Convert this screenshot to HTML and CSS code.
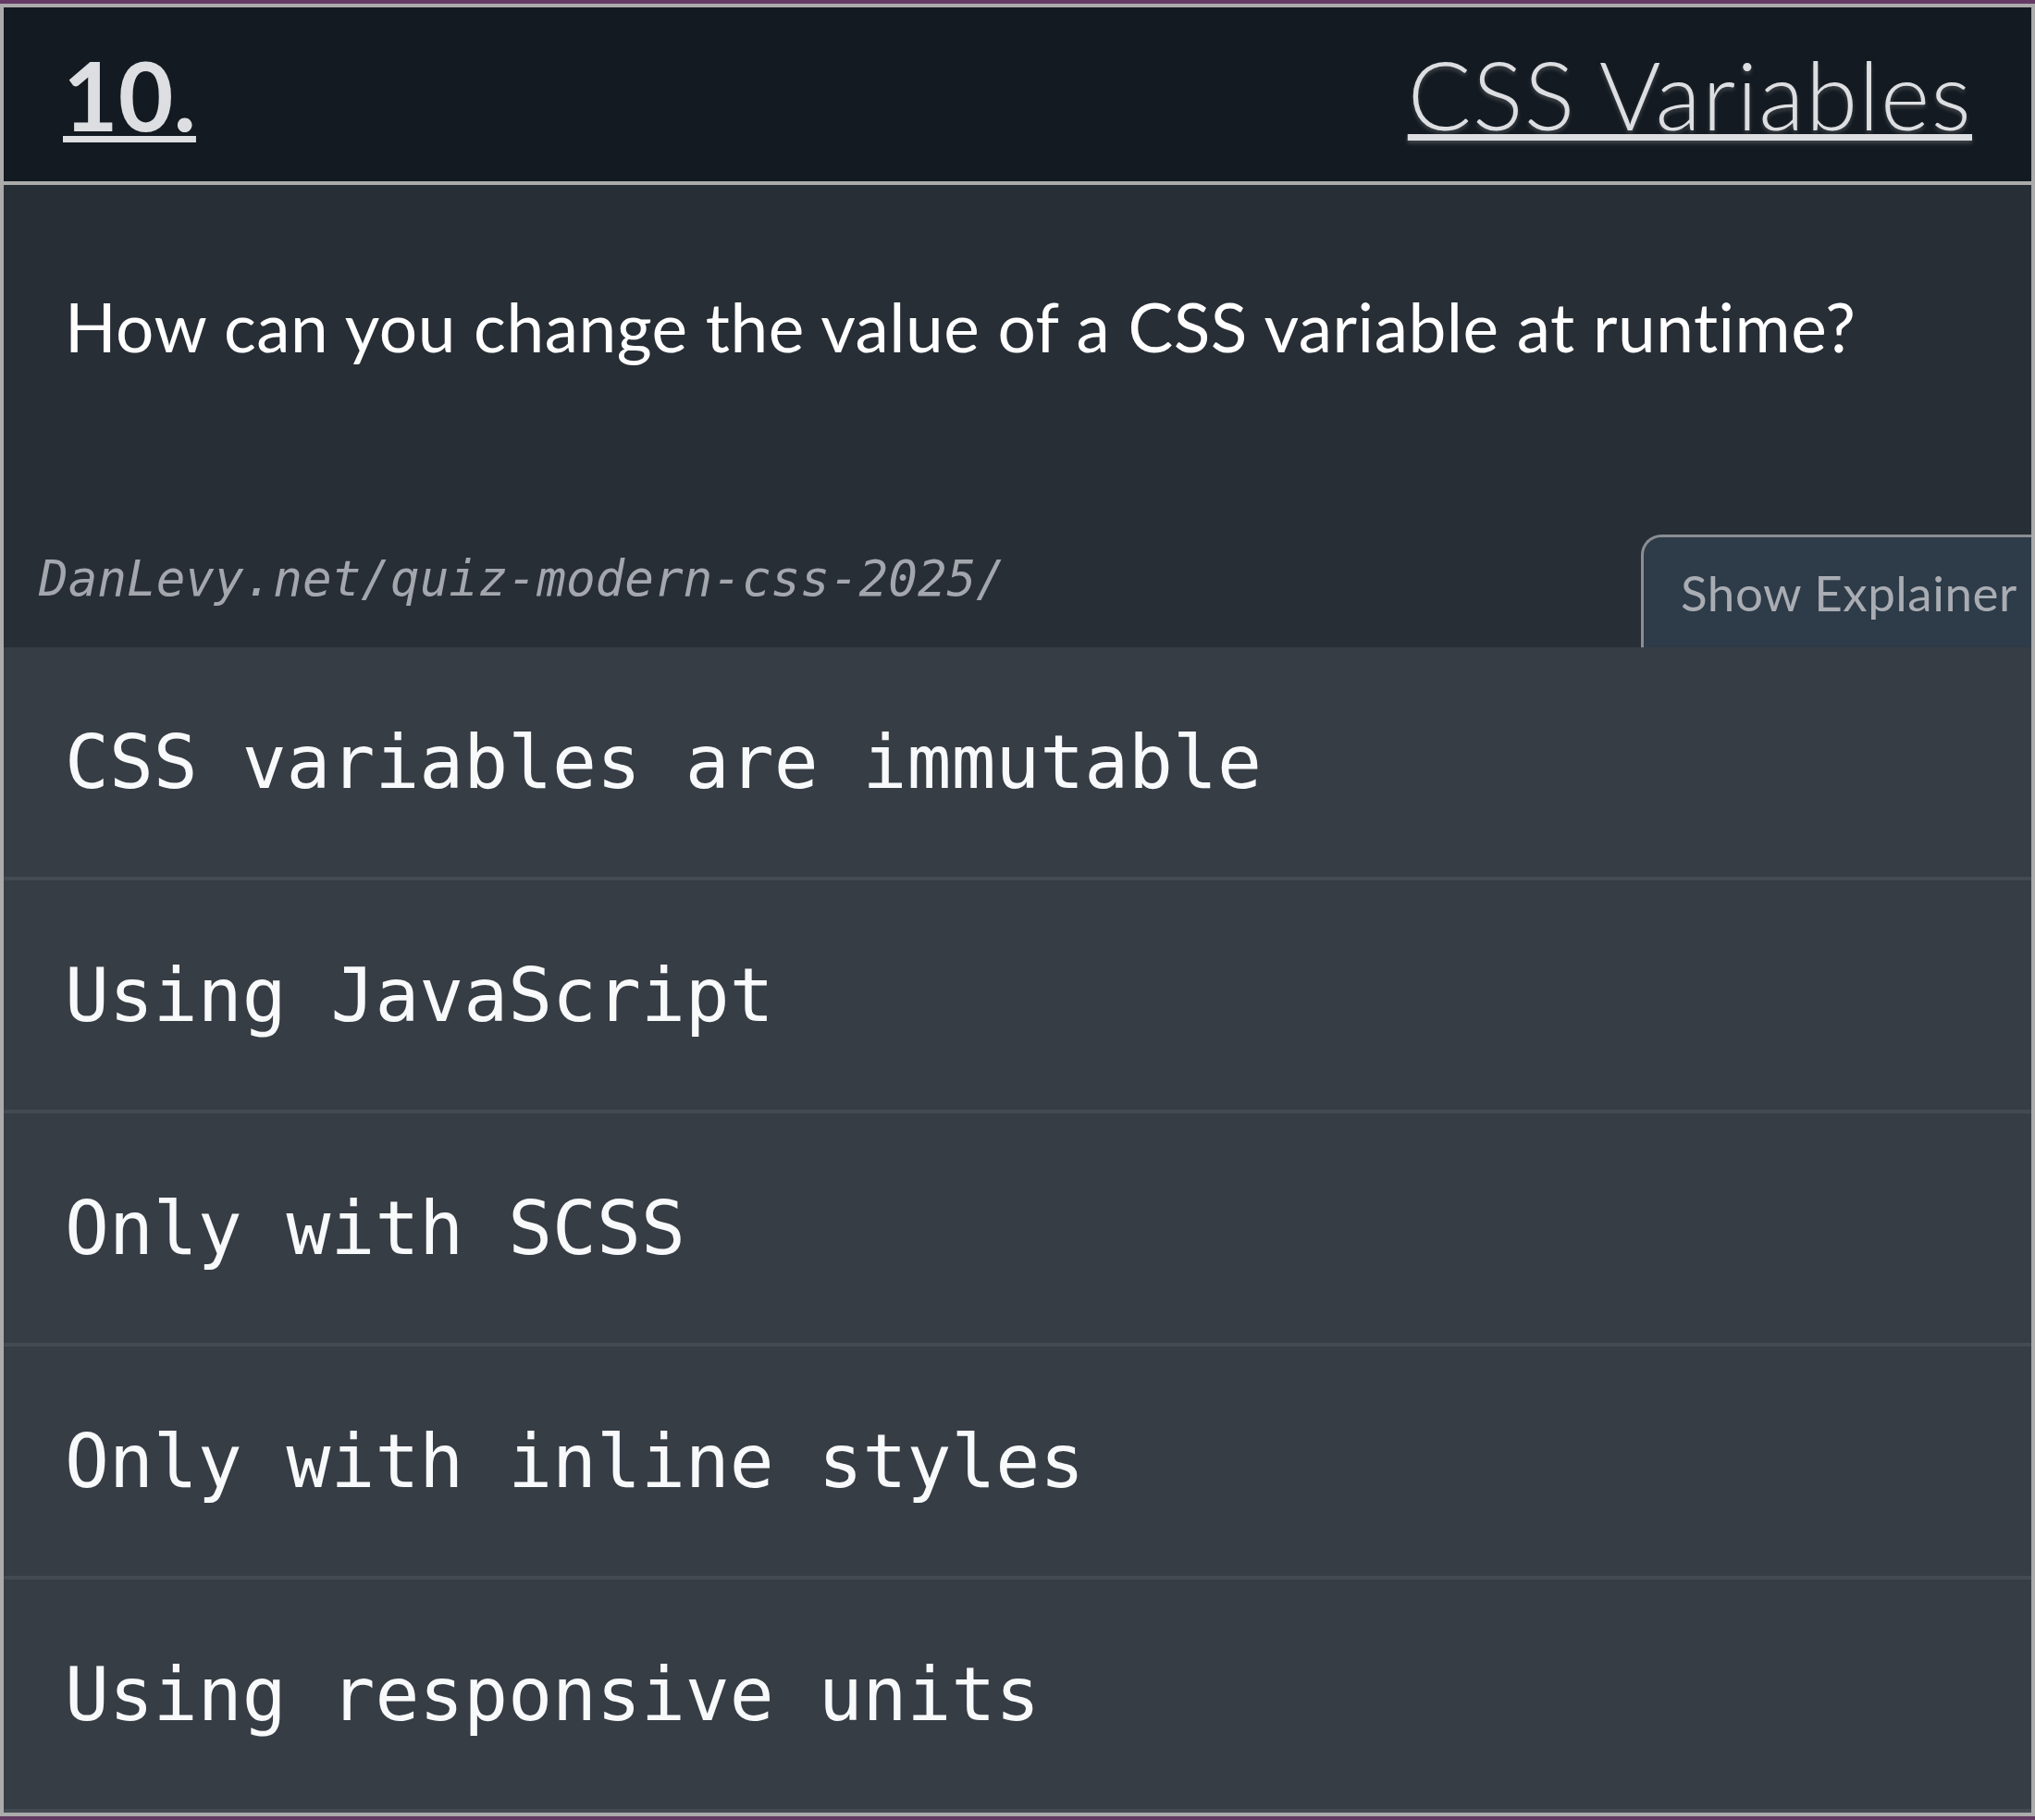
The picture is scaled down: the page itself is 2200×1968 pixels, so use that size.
FILE: index.html
```html
<!DOCTYPE html>
<html lang="en">
<head>
<meta charset="utf-8">
<title>Quiz – CSS Variables</title>
<link rel="stylesheet" href="styles.css">
</head>
<body>
<div class="card">
  <header class="card-header">
    <a class="q-num" href="#">10.</a>
    <a class="q-topic" href="#">CSS Variables</a>
  </header>
  <section class="q-body">
    <p class="q-text">How can you change the value of a CSS variable at runtime?</p>
    <div class="q-footer">
      <span class="q-url">DanLevy.net/quiz-modern-css-2025/</span>
      <button class="explain-btn">Show Explainer</button>
    </div>
  </section>
  <ul class="options">
    <li class="option">CSS variables are immutable</li>
    <li class="option">Using JavaScript</li>
    <li class="option">Only with SCSS</li>
    <li class="option">Only with inline styles</li>
    <li class="option">Using responsive units</li>
  </ul>
</div>
</body>
</html>
```
FILE: styles.css
```css
html, body {
  margin: 0;
  padding: 0;
}
body {
  background: #643a64;
  padding: 4px 0;
  font-family: "Lato", "Open Sans", sans-serif;
}
.card {
  border: 4px solid #ababab;
  background: #282e35;
}
.card-header {
  display: flex;
  justify-content: space-between;
  align-items: center;
  height: 192px;
  padding: 0 64px;
  background: #131a21;
  border-bottom: 4px solid #ababab;
  box-sizing: border-box;
}
.q-num {
  color: #dcdee1;
  font-weight: 700;
  font-size: 103px;
  line-height: 1;
  text-decoration: underline;
  text-decoration-thickness: 7px;
  text-underline-offset: 5px;
}
.q-topic {
  color: #dcdee1;
  font-weight: 300;
  font-size: 102px;
  letter-spacing: 1.2px;
  line-height: 1;
  text-decoration: underline;
  text-decoration-thickness: 7px;
  text-underline-offset: 4px;
  text-shadow: 0 3px 4px rgba(150,150,150,0.35);
}
.q-body {
  height: 500px;
  display: flex;
  flex-direction: column;
  justify-content: space-between;
  background: #282e35;
}
.q-text {
  margin: 0;
  padding: 110px 64px 0 66px;
  color: #ffffff;
  font-size: 73px;
  letter-spacing: 0.5px;
  line-height: 1.2;
}
.q-footer {
  display: flex;
  justify-content: space-between;
  align-items: flex-end;
  height: 122px;
}
.q-url {
  font-family: "DejaVu Sans Mono", monospace;
  font-style: italic;
  font-size: 52.6px;
  color: #a3a7ad;
  padding-left: 38px;
  margin-bottom: 44px;
}
.explain-btn {
  width: 422px;
  height: 122px;
  box-sizing: border-box;
  border: 3px solid #8a8e93;
  border-right: none;
  border-bottom: none;
  border-top-left-radius: 22px;
  background: #2e3b48;
  color: #a9adb3;
  font-family: "Lato", "Open Sans", sans-serif;
  font-size: 53px;
  letter-spacing: 0.5px;
  text-align: left;
  padding: 0 0 0 40px;
}
.options {
  list-style: none;
  margin: 0;
  padding: 0;
}
.option {
  height: 252px;
  box-sizing: border-box;
  display: flex;
  align-items: center;
  padding: 0 64px 0 66px;
  background: #373d45;
  border-bottom: 4px solid #434a51;
  color: #f8f9fa;
  font-family: "DejaVu Sans Mono", monospace;
  font-size: 79.6px;
}
```
